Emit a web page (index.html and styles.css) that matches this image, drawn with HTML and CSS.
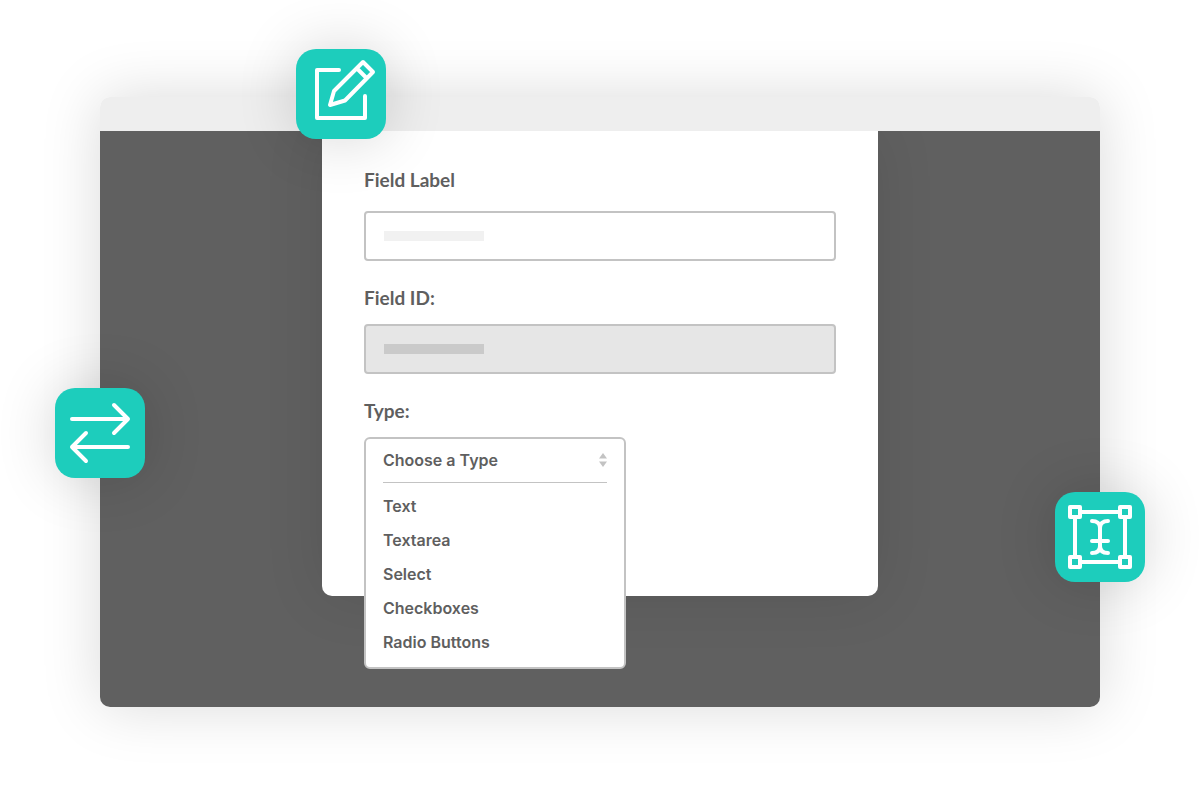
FILE: index.html
```html
<!DOCTYPE html>
<html lang="en">
<head>
<meta charset="utf-8">
<meta name="viewport" content="width=device-width, initial-scale=1">
<title>Field editor</title>
<link rel="stylesheet" href="styles.css">
</head>
<body>
<main class="stage">
  <div class="window">
    <div class="window-bar"></div>
    <div class="window-body">
      <form class="card">
        <div class="field">
          <label class="label" for="field-label">Field Label</label>
          <input class="input input-first" id="field-label" type="text">
        </div>
        <div class="field">
          <label class="label" for="field-id">Field ID:</label>
          <input class="input input-readonly" id="field-id" type="text" readonly>
        </div>
        <div class="field">
          <label class="label" for="type-toggle">Type:</label>
          <div class="picker">
            <div class="menu">
              <button class="toggle" id="type-toggle" type="button" aria-haspopup="listbox" aria-expanded="true">
                <span>Choose a Type</span>
                <svg class="arrows" width="8" height="14" viewBox="0 0 8 14" aria-hidden="true"><path d="M4 0L8 5.500H0zM4 14L0 8.500H8z"/></svg>
              </button>
              <div class="options">
                <button class="option" type="button">Text</button>
                <button class="option" type="button">Textarea</button>
                <button class="option" type="button">Select</button>
                <button class="option" type="button">Checkboxes</button>
                <button class="option" type="button">Radio Buttons</button>
              </div>
            </div>
          </div>
        </div>
      </form>
    </div>
    <div class="badge badge-edit">
      <svg class="icon" viewBox="0 0 90 90" aria-hidden="true">
        <path d="M43 21H21V69H69V47"/>
        <path d="M34 56L38 42L67 13L77 23L49 51.500zM61 19.500L70.500 29"/>
      </svg>
    </div>
    <div class="badge badge-swap">
      <svg class="icon" viewBox="0 0 90 90" aria-hidden="true">
        <path d="M17 31H73M59 17L73 31L59 45M73 59H17M31 45L17 59L31 73"/>
      </svg>
    </div>
    <div class="badge badge-text">
      <svg class="icon" viewBox="0 0 90 90" aria-hidden="true">
        <path d="M27 20H63M70 27V63M63 70H27M20 63V27"/>
        <path d="M15 15H25V25H15zM65 15H75V25H65zM15 65H25V75H15zM65 65H75V75H65z"/>
        <path d="M37 29C42 29 45 31.500 45 36V54C45 59 42 61 37 61M53 29C48 29 45 31.500 45 36M45 54C45 59 48 61 53 61M37 49H53"/>
      </svg>
    </div>
  </div>
</main>
</body>
</html>
```
FILE: styles.css
```css
* {
  box-sizing: border-box;
}

body {
  margin: 0;
  background: #fff;
  color: #5f5f5f;
  font-family: Lato, "Liberation Sans", sans-serif;
}

.stage {
  padding: 97px 100px 80px;
}

.window {
  position: relative;
  border-radius: 10px;
  box-shadow: 0 0 60px rgba(0, 0, 0, 0.15);
}

.window-bar {
  height: 34px;
  background: #eee;
  border-radius: 10px 10px 0 0;
}

.window-body {
  display: flex;
  justify-content: center;
  align-items: flex-start;
  padding: 0 24px 111px;
  background: #606060;
  border-radius: 0 0 10px 10px;
  overflow: clip;
}

.card {
  display: flex;
  flex-direction: column;
  gap: 25px;
  width: 100%;
  max-width: 556px;
  min-height: 465px;
  padding: 37px 42px;
  background: #fff;
  border-radius: 0 0 10px 10px;
  box-shadow: 0 0 60px rgba(0, 0, 0, 0.1);
}

.field {
  display: flex;
  flex-direction: column;
  gap: 14px;
}

.label {
  font-size: 19px;
  font-weight: 700;
  line-height: 24px;
}

.input {
  width: 100%;
  height: 50px;
  padding: 0 18px;
  border: 2px solid #c3c3c3;
  border-radius: 4px;
  background: linear-gradient(#f1f1f1, #f1f1f1) 18px 18px / 100px 10px no-repeat #fff;
  color: inherit;
  font: inherit;
}

.input-first {
  margin-top: 5px;
}

.input-readonly {
  background: linear-gradient(#cacaca, #cacaca) 18px 18px / 100px 10px no-repeat #e6e6e6;
}

.picker {
  position: relative;
}

.menu {
  position: absolute;
  top: 0;
  left: 0;
  width: 262px;
  padding: 0 17px 8px;
  border: 2px solid #c3c3c3;
  border-radius: 6px;
  background: #fff;
}

.toggle,
.option {
  width: 100%;
  padding: 0;
  border: 0;
  background: none;
  color: inherit;
  font-family: Inter, "Liberation Sans", sans-serif;
  font-size: 16px;
  font-weight: 600;
  text-align: left;
}

.toggle {
  display: flex;
  align-items: center;
  justify-content: space-between;
  height: 44px;
  padding-bottom: 2px;
  border-bottom: 1px solid #c3c3c3;
}

.arrows {
  fill: #c3c3c3;
}

.options {
  padding-top: 6px;
}

.option {
  display: block;
  height: 34px;
}

.badge {
  position: absolute;
  width: 90px;
  height: 90px;
  border-radius: 20px;
  background: #1dcdbc;
  box-shadow: 0 0 60px rgba(0, 0, 0, 0.16);
}

.badge-edit {
  top: -48px;
  left: 196px;
}

.badge-swap {
  top: 291px;
  left: -45px;
}

.badge-text {
  top: 395px;
  right: -45px;
}

.icon {
  display: block;
  fill: none;
  stroke: #fff;
  stroke-width: 4;
  stroke-linecap: round;
  stroke-linejoin: round;
}
```
